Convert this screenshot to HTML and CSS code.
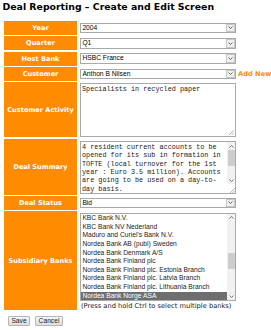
FILE: index.html
```html
<!DOCTYPE html>
<html>
<head>
<meta charset="utf-8">
<title>Deal Reporting</title>
<link rel="stylesheet" href="styles.css">
</head>
<body>
<h1 class="title">Deal Reporting – Create and Edit Screen</h1>
<form class="form">
  <div class="label">Year</div>
  <div class="field"><div class="select"><span class="val">2004</span><span class="arrow"><svg width="5" height="3" viewBox="0 0 5 3"><polyline points="0.5,0.5 2.5,2.5 4.5,0.5" fill="none" stroke="#555" stroke-width="0.9"/></svg></span></div></div>

  <div class="label">Quarter</div>
  <div class="field"><div class="select"><span class="val">Q1</span><span class="arrow"><svg width="5" height="3" viewBox="0 0 5 3"><polyline points="0.5,0.5 2.5,2.5 4.5,0.5" fill="none" stroke="#555" stroke-width="0.9"/></svg></span></div></div>

  <div class="label">Host Bank</div>
  <div class="field"><div class="select"><span class="val">HSBC France</span><span class="arrow"><svg width="5" height="3" viewBox="0 0 5 3"><polyline points="0.5,0.5 2.5,2.5 4.5,0.5" fill="none" stroke="#555" stroke-width="0.9"/></svg></span></div></div>

  <div class="label">Customer</div>
  <div class="field"><div class="select"><span class="val">Anthon B Nilsen</span><span class="arrow"><svg width="5" height="3" viewBox="0 0 5 3"><polyline points="0.5,0.5 2.5,2.5 4.5,0.5" fill="none" stroke="#555" stroke-width="0.9"/></svg></span></div></div>
  <div class="addnew">Add New</div>

  <div class="label">Customer Activity</div>
  <div class="field">
    <div class="textbox tb-activity">
      <textarea class="ta">Specialists in recycled paper</textarea>
      <svg class="grip" width="6" height="6" viewBox="0 0 6 6"><line x1="1" y1="6" x2="6" y2="1" stroke="#9a9a9a" stroke-width="0.7"/><line x1="3.5" y1="6" x2="6" y2="3.5" stroke="#9a9a9a" stroke-width="0.7"/></svg>
    </div>
  </div>

  <div class="label">Deal Summary</div>
  <div class="field">
    <div class="textbox tb-summary">
      <textarea class="ta">4 resident current accounts to be opened for its sub in formation in TOFTE (local turnover for the 1st year : Euro 3.5 million). Accounts are going to be used on a day-to-day basis.
Competition: Handelsbanken, Danske Bank.</textarea>
      <div class="sb">
        <div class="sb-btn"><svg width="5" height="3" viewBox="0 0 5 3"><polyline points="0.5,2.5 2.5,0.5 4.5,2.5" fill="none" stroke="#666" stroke-width="0.9"/></svg></div>
        <div class="sb-track"><div class="thumb thumb-summary"></div></div>
        <div class="sb-btn"><svg width="5" height="3" viewBox="0 0 5 3"><polyline points="0.5,0.5 2.5,2.5 4.5,0.5" fill="none" stroke="#666" stroke-width="0.9"/></svg></div>
        <div class="sb-corner"><svg width="6" height="6" viewBox="0 0 6 6"><line x1="1" y1="6" x2="6" y2="1" stroke="#9a9a9a" stroke-width="0.7"/><line x1="3.5" y1="6" x2="6" y2="3.5" stroke="#9a9a9a" stroke-width="0.7"/></svg></div>
      </div>
    </div>
  </div>

  <div class="label">Deal Status</div>
  <div class="field"><div class="select"><span class="val">Bid</span><span class="arrow"><svg width="5" height="3" viewBox="0 0 5 3"><polyline points="0.5,0.5 2.5,2.5 4.5,0.5" fill="none" stroke="#555" stroke-width="0.9"/></svg></span></div></div>

  <div class="label">Subsidiary Banks</div>
  <div class="field field-col">
    <div class="listbox">
      <ul class="items">
        <li>KBC Bank N.V.</li>
        <li>KBC Bank NV Nederland</li>
        <li>Maduro and Curiel's Bank N.V.</li>
        <li>Nordea Bank AB (publ) Sweden</li>
        <li>Nordea Bank Denmark A/S</li>
        <li>Nordea Bank Finland plc</li>
        <li>Nordea Bank Finland plc. Estonia Branch</li>
        <li>Nordea Bank Finland plc. Latvia Branch</li>
        <li>Nordea Bank Finland plc. Lithuania Branch</li>
        <li class="selected">Nordea Bank Norge ASA</li>
      </ul>
      <div class="sb">
        <div class="sb-btn"><svg width="5" height="3" viewBox="0 0 5 3"><polyline points="0.5,2.5 2.5,0.5 4.5,2.5" fill="none" stroke="#666" stroke-width="0.9"/></svg></div>
        <div class="sb-track"><div class="thumb thumb-list"></div></div>
        <div class="sb-btn"><svg width="5" height="3" viewBox="0 0 5 3"><polyline points="0.5,0.5 2.5,2.5 4.5,0.5" fill="none" stroke="#666" stroke-width="0.9"/></svg></div>
      </div>
    </div>
    <p class="hint">(Press and hold Ctrl to select multiple banks)</p>
  </div>
</form>
<div class="buttons">
  <button class="btn btn-save" type="button">Save</button>
  <button class="btn btn-cancel" type="button">Cancel</button>
</div>
</body>
</html>
```
FILE: styles.css
```css
html, body {
  margin: 0;
  padding: 0;
  background: #fff;
  color: #000;
  font-family: "DejaVu Sans", Verdana, sans-serif;
}

.title {
  font: bold 9.35px/11px "DejaVu Sans", Verdana, sans-serif;
  margin: 1.4px 0 0 2.5px;
  white-space: nowrap;
}

.form {
  display: grid;
  grid-template-columns: 73px 159px auto;
  grid-template-rows: 14px 14px 14px 14px 55px 56px 14px 99px;
  row-gap: 1.33px;
  margin: 8.6px 0 0 4px;
}

.label {
  grid-column: 1;
  background: #ff8c00;
  color: #fff;
  font: bold 6.6px/8px "DejaVu Sans", Verdana, sans-serif;
  display: flex;
  align-items: center;
  justify-content: center;
  text-align: center;
  white-space: nowrap;
}

.field {
  grid-column: 2;
  padding-left: 3px;
  display: flex;
  align-items: center;
}

.field-col {
  flex-direction: column;
  align-items: flex-start;
  justify-content: flex-start;
  padding-top: 1.6px;
}

.addnew {
  grid-column: 3;
  padding-left: 2px;
  color: #ff8c00;
  font: bold 6.7px/8px "DejaVu Sans", Verdana, sans-serif;
  display: flex;
  align-items: center;
  white-space: nowrap;
}

.select {
  width: 156px;
  height: 10.7px;
  box-sizing: border-box;
  border: 1px solid #a9a9a9;
  background: #fff;
  display: flex;
}

.select .val {
  flex: 1;
  font: 6.7px/8.7px "Liberation Sans", Arial, sans-serif;
  padding-left: 1.4px;
  white-space: nowrap;
  overflow: hidden;
}

.select .arrow {
  width: 9px;
  box-sizing: border-box;
  border: 1px solid #c6c6c6;
  background: #efefef;
  display: flex;
  align-items: center;
  justify-content: center;
}

.textbox {
  position: relative;
  width: 156px;
  box-sizing: border-box;
  border: 1px solid #a9a9a9;
  background: #fff;
  display: flex;
}

.tb-activity { height: 54px; }
.tb-summary { height: 53px; margin-top: 2px; }

.ta {
  flex: 1;
  min-width: 0;
  border: 0;
  margin: 0;
  padding: 1px 1px;
  resize: none;
  overflow: hidden;
  outline: none;
  background: transparent;
  color: #222;
  font: 6.8px/8.33px "Liberation Mono", "Courier New", monospace;
}

.grip {
  position: absolute;
  right: 1px;
  bottom: 1px;
}

.sb {
  width: 8px;
  display: flex;
  flex-direction: column;
  background: #f1f1f1;
}

.sb-btn {
  height: 8px;
  display: flex;
  align-items: center;
  justify-content: center;
}

.sb-track {
  flex: 1;
  display: flex;
  flex-direction: column;
}

.thumb {
  background: #cdcdcd;
  margin: 0 0.5px;
}

.thumb-summary { height: 16px; margin-top: 0; }
.thumb-list { height: 16px; margin-top: 31px; }

.sb-corner {
  height: 9px;
  background: #fff;
  display: flex;
  align-items: flex-end;
  justify-content: flex-end;
}

.listbox {
  width: 156px;
  height: 88.7px;
  box-sizing: border-box;
  border: 1px solid #a9a9a9;
  background: #fff;
  display: flex;
}

.items {
  flex: 1;
  list-style: none;
  margin: 0;
  padding: 0;
  overflow: hidden;
}

.items li {
  font: 6.7px/8.67px "Liberation Sans", Arial, sans-serif;
  height: 8.67px;
  padding-left: 1.4px;
  white-space: nowrap;
  color: #222;
}

.items li.selected {
  background: #6e6e6e;
  color: #fff;
}

.hint {
  font-family: "DejaVu Sans", Verdana, sans-serif;
  font-size: 6.7px;
  font-weight: normal;
  line-height: 8.5px;
  margin: 0.3px 0 0 0;
  padding-left: 1px;
  white-space: nowrap;
  color: #222;
}

.buttons {
  display: flex;
  gap: 5px;
  margin: 5.5px 0 0 8px;
}

.btn {
  height: 10px;
  box-sizing: border-box;
  padding: 0;
  border: 1px solid #b5b5b5;
  border-radius: 1px;
  background: linear-gradient(#f6f6f6, #dedede);
  font: 6.7px/8px "Liberation Sans", Arial, sans-serif;
  color: #222;
}

.btn-save { width: 22px; }
.btn-cancel { width: 28px; }
```
